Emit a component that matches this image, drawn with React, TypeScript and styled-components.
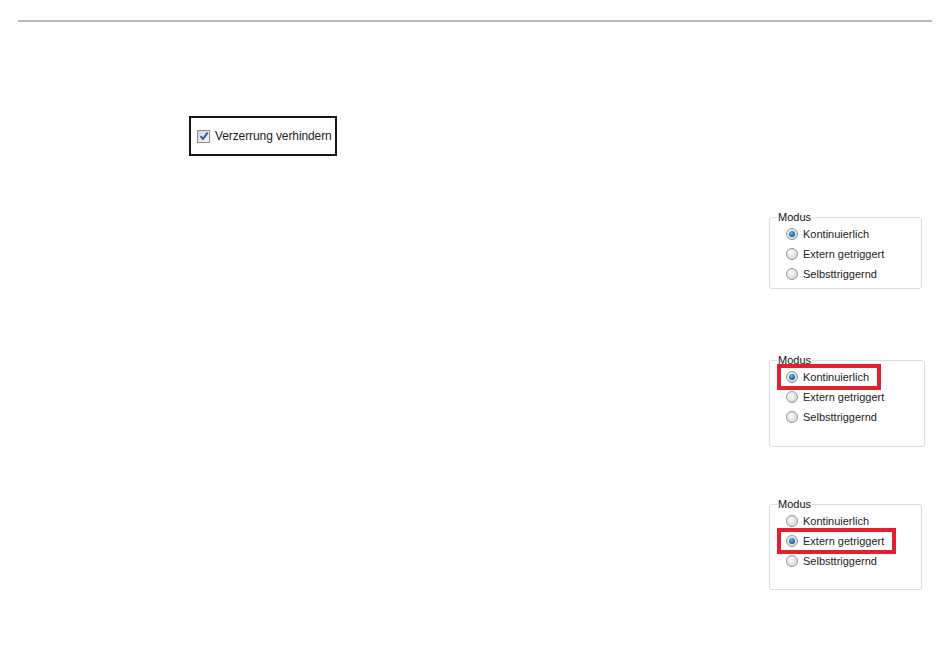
import styled, { createGlobalStyle } from 'styled-components';

/* -------- Global -------- */
const GlobalStyle = createGlobalStyle`
  html, body {
    margin: 0;
    padding: 0;
    background: #ffffff;
  }
  body {
    font-family: "Liberation Sans", Arial, sans-serif;
    color: #1b1b1b;
  }
`;

/* -------- Styled Components -------- */
const Page = styled.div`
  width: 950px;
  height: 652px;
  padding-top: 20px;
  box-sizing: border-box;
  display: flex;
  flex-direction: column;
`;

const Rule = styled.div`
  margin: 0 18px;
  border-top: 2px solid #b9b9b9;
`;

const CheckFrame = styled.div`
  margin: 94px 0 0 189px;
  width: 148px;
  height: 40px;
  box-sizing: border-box;
  border: 2px solid #161616;
  display: flex;
  align-items: center;
  padding-left: 6px;
  gap: 5px;
`;

const CheckBox = styled.span`
  width: 13px;
  height: 13px;
  box-sizing: border-box;
  border: 1px solid #8e8f8f;
  background: linear-gradient(135deg, #d6d6d6 0%, #f4f4f4 100%);
  display: flex;
  align-items: center;
  justify-content: center;
  & svg {
    width: 10px;
    height: 10px;
  }
`;

const Label = styled.span<{ $size?: number }>`
  font-size: ${props => props.$size ?? 11}px;
  line-height: 14px;
  white-space: nowrap;
  color: #1b1b1b;
  letter-spacing: ${props => (props.$size ?? 11) > 11 ? '-0.1px' : '0'};
`;

const Groups = styled.div`
  display: flex;
  flex-direction: column;
  align-items: flex-start;
  padding-left: 769px;
`;

const GroupBox = styled.fieldset<{ $top: number; $width: number; $height: number }>`
  margin: ${props => props.$top}px 0 0 0;
  width: ${props => props.$width}px;
  height: ${props => props.$height}px;
  box-sizing: border-box;
  padding: 0 0 0 16px;
  border: 1px solid #d5dfe5;
  border-radius: 3px;
  display: flex;
  flex-direction: column;
  align-items: flex-start;
`;

const Legend = styled.legend`
  font-size: 11px;
  line-height: 13px;
  padding: 0 1px;
  margin-left: -9px;
  color: #111111;
`;

const Row = styled.div<{ $highlight?: boolean }>`
  display: flex;
  align-items: center;
  gap: 5px;
  height: 20px;
  ${props => props.$highlight ? `
    height: 18px;
    border: 4px solid #e3202f;
    padding: 0 8px 0 5px;
    margin: -3px 0 -3px -9px;
  ` : ''}
`;

const Radio = styled.span<{ $checked?: boolean }>`
  width: 12px;
  height: 12px;
  box-sizing: border-box;
  border-radius: 50%;
  border: 1px solid #949494;
  background: radial-gradient(circle at 35% 35%, #fbfbfb 0%, #e0e0e0 60%, #c8c8c8 100%);
  display: flex;
  align-items: center;
  justify-content: center;
  &::after {
    content: '';
    display: ${props => props.$checked ? 'block' : 'none'};
    width: 6px;
    height: 6px;
    border-radius: 50%;
    background: radial-gradient(circle at 40% 35%, #6fb1e6 0%, #1f66a8 60%, #0d3f74 100%);
  }
`;

/* -------- Components -------- */
interface ModeGroupProps {
  top: number;
  width: number;
  height: number;
  selected: number;
  highlight?: boolean;
}

const modes = ['Kontinuierlich', 'Extern getriggert', 'Selbsttriggernd'];

function ModeGroup(props: ModeGroupProps) {
  const { top, width, height, selected, highlight } = props;
  return (
    <GroupBox $top={top} $width={width} $height={height}>
      <Legend>Modus</Legend>
      {modes.map((mode, i) => (
        <Row key={mode} $highlight={highlight && i === selected}>
          <Radio $checked={i === selected} />
          <Label>{mode}</Label>
        </Row>
      ))}
    </GroupBox>
  );
}

function App() {
  return (
    <>
      <GlobalStyle />
      <Page>
        <Rule />
        <CheckFrame>
          <CheckBox>
            <svg viewBox="0 0 10 10">
              <path d="M1.5 5.2 L4 8 L8.6 1.6" fill="none" stroke="#2b4fb0" strokeWidth="1.8" strokeLinejoin="round" />
            </svg>
          </CheckBox>
          <Label $size={12}>Verzerrung verhindern</Label>
        </CheckFrame>
        <Groups>
          <ModeGroup top={55} width={153} height={78} selected={0} />
          <ModeGroup top={65} width={156} height={93} selected={0} highlight />
          <ModeGroup top={51} width={153} height={92} selected={1} highlight />
        </Groups>
      </Page>
    </>
  );
}

export default App;
